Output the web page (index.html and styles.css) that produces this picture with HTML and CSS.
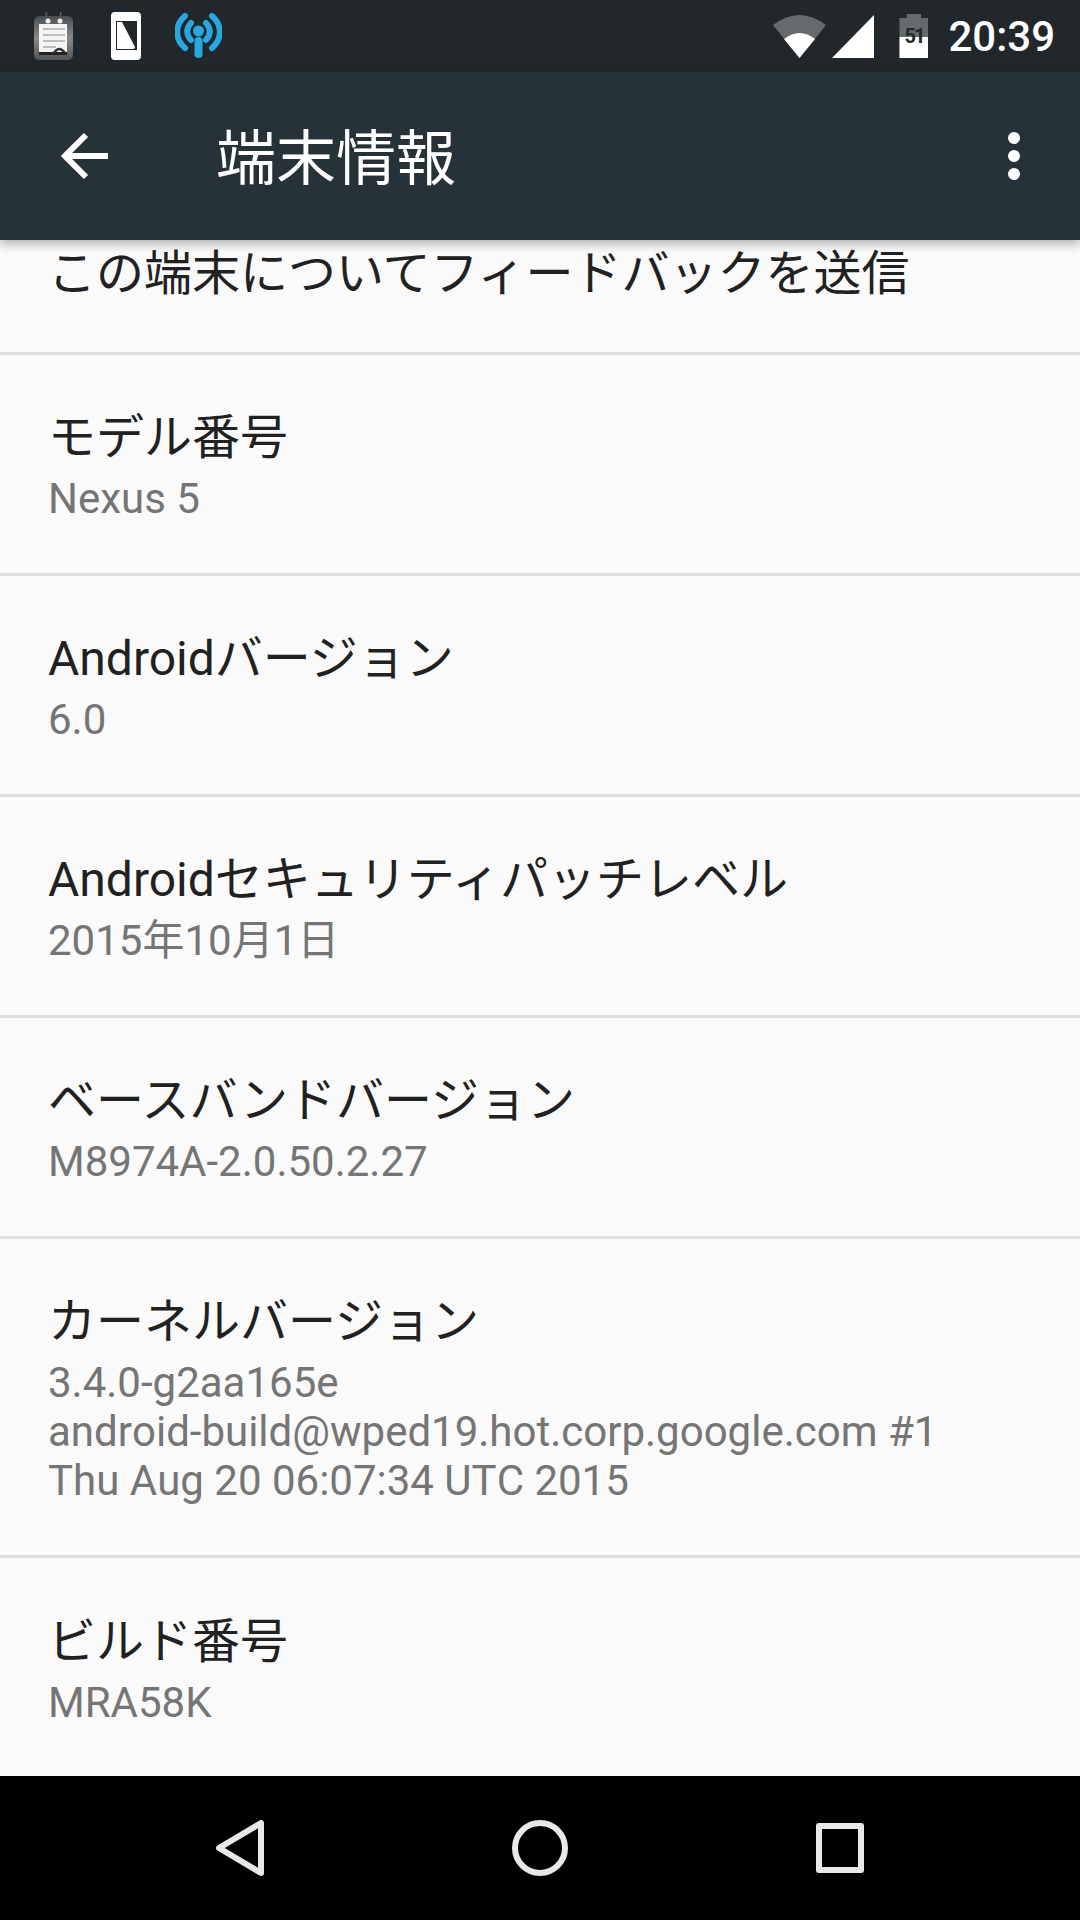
FILE: index.html
```html
<!DOCTYPE html>
<html lang="ja">
<head>
    <meta charset="UTF-8">
    <meta name="viewport" content="width=device-width, initial-scale=1.0">
    <title>端末情報</title>
    <link rel="stylesheet" href="styles.css">
</head>
<body>

    <div class="screen">
        <!-- Status bar -->
        <div class="status-bar">
            <div class="status-left">
                <svg class="icon-notes" width="39" height="48" viewBox="0 0 39 48">
                    <defs>
                        <linearGradient id="notesBody" x1="0" y1="0" x2="0" y2="1">
                            <stop offset="0" stop-color="#4a4d4f"/>
                            <stop offset="0.5" stop-color="#8a8a8a"/>
                            <stop offset="1" stop-color="#555"/>
                        </linearGradient>
                    </defs>
                    <path d="M13 6 L12 0 M26 6 L27 0" stroke="#555" stroke-width="2"/>
                    <path d="M6 4 H33 Q39 4 39 10 V42 Q39 48 33 48 H6 Q0 48 0 42 V10 Q0 4 6 4 Z" fill="url(#notesBody)"/>
                    <circle cx="14" cy="9" r="2.5" fill="#eee"/>
                    <circle cx="26" cy="9" r="2.5" fill="#eee"/>
                    <rect x="5" y="12" width="28" height="28" fill="#f4f4f4"/>
                    <rect x="5" y="40" width="28" height="3" fill="#222"/>
                    <path d="M9 17 H31 M9 23 H31 M9 29 H31 M9 35 H22" stroke="#aaa" stroke-width="1.5"/>
                    <path d="M20 41 Q25 33 31 41" stroke="#333" stroke-width="2.5" fill="none"/>
                </svg>
                <svg class="icon-sim" width="30" height="48" viewBox="0 0 30 48">
                    <rect width="30" height="48" rx="4" fill="#fff"/>
                    <rect x="5" y="9" width="21" height="29" fill="#21272b"/>
                    <path d="M6 10 H11 L24 35 Q24 37 22 37 H6 Z" fill="#fff"/>
                </svg>
                <svg class="icon-hotspot" width="47" height="46" viewBox="0 0 47 46" fill="none" stroke="#29a8e0" stroke-linecap="round">
                    <path d="M10 3 C-0.500 12 -0.500 26 10 35" stroke-width="6"/>
                    <path d="M37 3 C47.500 12 47.500 26 37 35" stroke-width="6"/>
                    <path d="M16 10 C11 15 11 22 16 27" stroke-width="6"/>
                    <path d="M31 10 C36 15 36 22 31 27" stroke-width="6"/>
                    <circle cx="23.500" cy="18" r="5.500" fill="#29a8e0" stroke="none"/>
                    <path d="M23.500 28 V41" stroke-width="8"/>
                </svg>
            </div>
            <div class="status-right">
                <svg class="icon-wifi" width="53" height="43" viewBox="0 0 53 43">
                    <path d="M0 10 Q26.500 -10 53 10 L26.500 43 Z" fill="#666a6c"/>
                    <path d="M11 24 Q26.500 12 42 24 L26.500 43 Z" fill="#fff"/>
                </svg>
                <svg class="icon-signal" width="42" height="43" viewBox="0 0 42 43">
                    <path d="M42 0 V43 H0 Z" fill="#fff"/>
                </svg>
                <div class="battery">
                    <span class="battery-level">51</span>
                </div>
                <span class="clock">20:39</span>
            </div>
        </div>

        <!-- Toolbar -->
        <div class="toolbar">
            <svg class="icon-back" width="48" height="48" viewBox="0 0 48 48" fill="none" stroke="#fff" stroke-width="6">
                <path d="M48 24 H4 M26 3 L5 24 L26 45"/>
            </svg>
            <h1 class="toolbar-title">端末情報</h1>
            <div class="overflow-dots">
                <span></span><span></span><span></span>
            </div>
        </div>

        <!-- Settings list, scrolled so the first row is cut off -->
        <div class="list">
            <div class="row row-cut">
                <div class="row-title">この端末についてフィードバックを送信</div>
            </div>
            <div class="row">
                <div class="row-title">モデル番号</div>
                <div class="row-sub">Nexus 5</div>
            </div>
            <div class="row">
                <div class="row-title">Androidバージョン</div>
                <div class="row-sub">6.0</div>
            </div>
            <div class="row">
                <div class="row-title">Androidセキュリティパッチレベル</div>
                <div class="row-sub">2015年10月1日</div>
            </div>
            <div class="row">
                <div class="row-title">ベースバンドバージョン</div>
                <div class="row-sub">M8974A-2.0.50.2.27</div>
            </div>
            <div class="row row-kernel">
                <div class="row-title">カーネルバージョン</div>
                <div class="row-sub">3.4.0-g2aa165e<br>android-build@wped19.hot.corp.google.com #1<br>Thu Aug 20 06:07:34 UTC 2015</div>
            </div>
            <div class="row row-last">
                <div class="row-title">ビルド番号</div>
                <div class="row-sub">MRA58K</div>
            </div>
        </div>

        <!-- Navigation bar -->
        <div class="nav-bar">
            <svg width="48" height="56" viewBox="0 0 48 56" fill="none" stroke="#e8e8e8" stroke-width="6" stroke-linejoin="round">
                <path d="M45 3 V53 L3 28 Z"/>
            </svg>
            <svg width="56" height="56" viewBox="0 0 56 56" fill="none" stroke="#e8e8e8" stroke-width="6">
                <circle cx="28" cy="28" r="25"/>
            </svg>
            <svg width="48" height="50" viewBox="0 0 48 50" fill="none" stroke="#e8e8e8" stroke-width="6" stroke-linejoin="round">
                <rect x="3" y="3" width="42" height="44"/>
            </svg>
        </div>
    </div>

</body>
</html>
```

FILE: styles.css
```css
* {
    box-sizing: border-box;
}
body {
    margin: 0;
    font-family: Roboto, "Noto Sans CJK JP", sans-serif;
    background-color: #fafafa;
}
.screen {
    display: flex;
    flex-direction: column;
    width: 1080px;
    height: 1920px;
    overflow: hidden;
}
.status-bar {
    display: flex;
    justify-content: space-between;
    align-items: center;
    flex: none;
    height: 72px;
    padding: 0 25px 0 34px;
    background-color: #21272b;
}
.status-left {
    display: flex;
    align-items: center;
    gap: 38px;
}
.icon-hotspot {
    margin-left: -4px;
}
.status-right {
    display: flex;
    align-items: center;
}
.icon-signal {
    margin-left: 6px;
}
.battery {
    position: relative;
    width: 29px;
    height: 44px;
    margin-left: 25px;
    background: linear-gradient(#666a6c 0, #666a6c 52%, #fff 52%);
    clip-path: polygon(25% 0, 75% 0, 75% 9%, 100% 9%, 100% 100%, 0 100%, 0 9%, 25% 9%);
}
.battery-level {
    position: absolute;
    left: 0;
    right: 0;
    top: 11px;
    text-align: center;
    font-size: 20px;
    font-weight: 700;
    line-height: 22px;
    letter-spacing: -2px;
    color: #21272b;
}
.clock {
    margin-left: 20px;
    font-size: 42px;
    font-weight: 500;
    color: #fff;
}
.toolbar {
    position: relative;
    z-index: 1;
    display: flex;
    align-items: center;
    flex: none;
    height: 168px;
    padding: 0 60px;
    background-color: #263238;
    box-shadow: 0 4px 10px rgba(0, 0, 0, 0.3);
}
.toolbar-title {
    flex: 1;
    margin: 0 0 6px 108px;
    font-size: 60px;
    font-weight: 400;
    color: #fff;
}
.overflow-dots {
    display: flex;
    flex-direction: column;
    gap: 6px;
}
.overflow-dots span {
    width: 12px;
    height: 12px;
    border-radius: 50%;
    background-color: #fff;
}
.list {
    flex: 1;
    overflow: hidden;
}
.row {
    display: flex;
    flex-direction: column;
    justify-content: center;
    padding: 0 48px;
    height: 221px;
    border-bottom: 3px solid #dedede;
}
.row-cut {
    justify-content: flex-end;
    height: 115px;
    padding-bottom: 46px;
}
.row-kernel {
    height: 319px;
}
.row-title {
    font-size: 48px;
    line-height: 64px;
    color: #212121;
}
.row-sub {
    margin-top: 4px;
    font-size: 42px;
    line-height: 49px;
    font-kerning: none;
    color: #757575;
}
.row-last {
    border-bottom: none;
}
.nav-bar {
    display: flex;
    justify-content: space-between;
    align-items: center;
    flex: none;
    height: 144px;
    padding: 0 216px;
    background-color: #000;
}
```
